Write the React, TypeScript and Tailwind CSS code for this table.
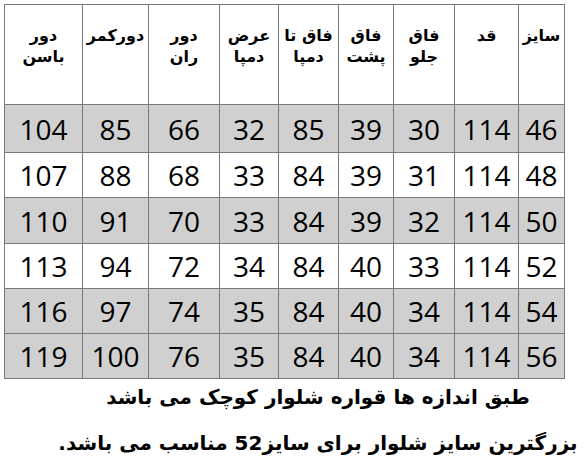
import React from 'react';

const headerLines: string[][] = [
    ['سایز'],
    ['قد'],
    ['فاق', 'جلو'],
    ['فاق', 'پشت'],
    ['فاق تا', 'دمپا'],
    ['عرض', 'دمپا'],
    ['دور', 'ران'],
    ['دورکمر'],
    ['دور', 'باسن'],
];
const widths = [46, 64, 61, 55, 60, 59, 71, 66, 78];

const rows: { cells: number[]; h: string; gray: boolean }[] = [
    { cells: [46, 114, 30, 39, 85, 32, 66, 85, 104], h: 'h-[48px]', gray: true },
    { cells: [48, 114, 31, 39, 84, 33, 68, 88, 107], h: 'h-[45px]', gray: false },
    { cells: [50, 114, 32, 39, 84, 33, 70, 91, 110], h: 'h-[46px]', gray: true },
    { cells: [52, 114, 33, 40, 84, 34, 72, 94, 113], h: 'h-[45px]', gray: false },
    { cells: [54, 114, 34, 40, 84, 35, 74, 97, 116], h: 'h-[45px]', gray: true },
    { cells: [56, 114, 34, 40, 84, 35, 76, 100, 119], h: 'h-[45px]', gray: true },
];

export default function App() {
    return (
        <div className="w-[586px] h-[473px] bg-white overflow-hidden pt-[4px] pl-[4px]">
            <table dir="rtl" className="table-fixed border-collapse w-[561px] text-black">
                <colgroup>
                    {widths.map((w, i) => (
                        <col key={i} style={{ width: w }} />
                    ))}
                </colgroup>
                <thead>
                    <tr className="h-[100px]">
                        {headerLines.map((lines, i) => (
                            <th
                                key={i}
                                className="border border-[#7a7a7a] align-top pt-[20px] px-0 font-bold text-[16px] leading-[21px] text-center font-['DejaVu_Sans',sans-serif]"
                            >
                                {lines.map((l) => (
                                    <div key={l}>{l}</div>
                                ))}
                            </th>
                        ))}
                    </tr>
                </thead>
                <tbody>
                    {rows.map((r, ri) => (
                        <tr key={ri} className={`${r.h} ${r.gray ? 'bg-[#d0d0d0]' : 'bg-white'}`}>
                            {r.cells.map((c, ci) => (
                                <td
                                    key={ci}
                                    className="border border-[#7a7a7a] text-center align-middle p-0 text-[28px] leading-none font-['Open_Sans',sans-serif]"
                                >
                                    {c}
                                </td>
                            ))}
                        </tr>
                    ))}
                </tbody>
            </table>
            <div dir="rtl" className="w-[636px] -ml-[4px] -mt-[5px] text-center font-bold text-[20px] leading-[46px] font-['DejaVu_Sans',sans-serif] text-black">
                <div>طبق اندازه ها قواره شلوار کوچک می باشد</div>
                <div>بزرگترین سایز شلوار برای سایز52 مناسب می باشد.</div>
            </div>
        </div>
    );
}
